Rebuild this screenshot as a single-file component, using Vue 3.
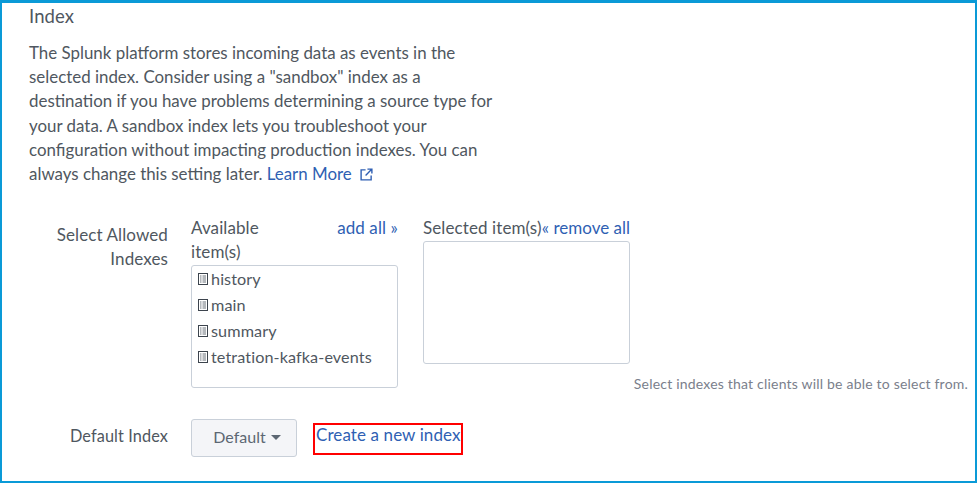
<template>
  <div class="frame">
    <h2 class="title">Index</h2>
    <p class="intro">
      The Splunk platform stores incoming data as events in the selected index. Consider using a "sandbox" index as a
      destination if you have problems determining a source type for your data. A sandbox index lets you troubleshoot
      your configuration without impacting production indexes. You can always change this setting later.
      <a class="link">Learn More
        <svg class="external" viewBox="0 0 14 14" width="13" height="13">
          <path d="M6 2H1.2v10.8H12V8M8 1.2h4.8V6M12.6 1.4 6 8" fill="none" stroke="currentColor" stroke-width="1.5" />
        </svg>
      </a>
    </p>

    <div class="form-row allowed">
      <div class="label">Select Allowed Indexes</div>
      <div class="pickers">
        <div class="picker">
          <div class="picker-head">
            <span class="picker-title">Available item(s)</span>
            <a class="link">add all »</a>
          </div>
          <ul class="list available">
            <li v-for="name in indexes" :key="name">
              <svg class="db-icon" viewBox="0 0 10 12" width="10" height="12">
                <rect x="0.5" y="0.5" width="9" height="11" fill="#fff" stroke="#3c444d" />
                <path d="M2 3h1.5M4.5 3H8M2 5h1.5M4.5 5H8M2 7h1.5M4.5 7H8M2 9h1.5M4.5 9H8" stroke="#6b727b" stroke-width="1" />
              </svg>
              <span>{{ name }}</span>
            </li>
          </ul>
        </div>
        <div class="picker">
          <div class="picker-head">
            <span class="picker-title selected-title">Selected item(s)</span>
            <a class="link remove-all">« remove all</a>
          </div>
          <div class="list selected"></div>
        </div>
        <div class="help">Select indexes that clients will be able to select from.</div>
      </div>
    </div>

    <div class="form-row default-row">
      <div class="label">Default Index</div>
      <button class="dropdown">Default<span class="caret"></span></button>
      <a class="link create">Create a new index</a>
    </div>
  </div>
</template>

<script setup>
const indexes = ['history', 'main', 'summary', 'tetration-kafka-events']
</script>

<style>
html, body {
  margin: 0;
  background: #fff;
}
</style>

<style scoped>
.frame {
  box-sizing: border-box;
  width: 977px;
  height: 483px;
  border: 2px solid #0a9ad7;
  border-top-width: 3px;
  padding: 1px 7px 0 27px;
  overflow: hidden;
  font-family: Lato, "Open Sans", sans-serif;
  font-size: 17px;
  letter-spacing: 0.1px;
  line-height: 24px;
  color: #4f5760;
}

.title {
  margin: 0;
  font-size: 18.5px;
  line-height: 24px;
  font-weight: 400;
}

.intro {
  margin: 13px 0 0;
  width: 470px;
  font-size: 16.9px;
  letter-spacing: 0;
  line-height: 24.2px;
}

.link {
  color: #2f5fb3;
  cursor: pointer;
}

.remove-all {
  white-space: nowrap;
  letter-spacing: 0;
}

.external {
  margin-left: 4px;
  vertical-align: -1px;
}

.form-row {
  display: flex;
}

.allowed {
  margin-top: 30px;
}

.label {
  box-sizing: border-box;
  width: 139px;
  flex-shrink: 0;
  padding-top: 7px;
  text-align: right;
}

.pickers {
  display: flex;
  margin-left: 23px;
  flex: 1;
}

.picker {
  width: 207px;
  margin-right: 25px;
}

.picker:nth-child(2) {
  margin-right: 0;
}

.picker-head {
  display: flex;
  justify-content: space-between;
  align-items: flex-start;
}

.picker-title {
  flex: 0 1 100px;
}

.selected-title {
  flex: none;
}

.list {
  box-sizing: border-box;
  margin: 0;
  padding: 0 6px;
  list-style: none;
  border: 1px solid #c9d0d9;
  border-radius: 3px;
  background: #fff;
}

.available {
  height: 123px;
  margin-top: 1px;
}

.available li {
  display: flex;
  align-items: center;
  height: 26px;
  gap: 3px;
  font-size: 16.2px;
}

.selected {
  height: 123px;
  margin-top: 1px;
}

.db-icon {
  flex-shrink: 0;
}

.help {
  margin-left: auto;
  align-self: flex-end;
  margin-bottom: -6px;
  font-size: 14px;
  letter-spacing: 0.2px;
  line-height: 20px;
  color: #7a808c;
  white-space: nowrap;
}

.default-row {
  margin-top: 31px;
  align-items: flex-start;
}

.default-row .label {
  padding-top: 5px;
  font-size: 16.3px;
}

.dropdown {
  box-sizing: border-box;
  width: 106px;
  height: 38px;
  margin-left: 23px;
  padding: 0 0 2px 6px;
  border: 1px solid #c9d0d9;
  border-radius: 3px;
  background: #f4f5f8;
  font: inherit;
  font-size: 16px;
  letter-spacing: 0;
  color: #5c6773;
}

.caret {
  display: inline-block;
  margin-left: 5px;
  vertical-align: 3px;
  border-left: 5px solid transparent;
  border-right: 5px solid transparent;
  border-top: 5px solid #5c6773;
}

.create {
  box-sizing: border-box;
  width: 150px;
  height: 32px;
  margin: 4px 0 0 16px;
  padding-left: 1px;
  border: 2px solid #f00;
  line-height: 20px;
  white-space: nowrap;
}
</style>
